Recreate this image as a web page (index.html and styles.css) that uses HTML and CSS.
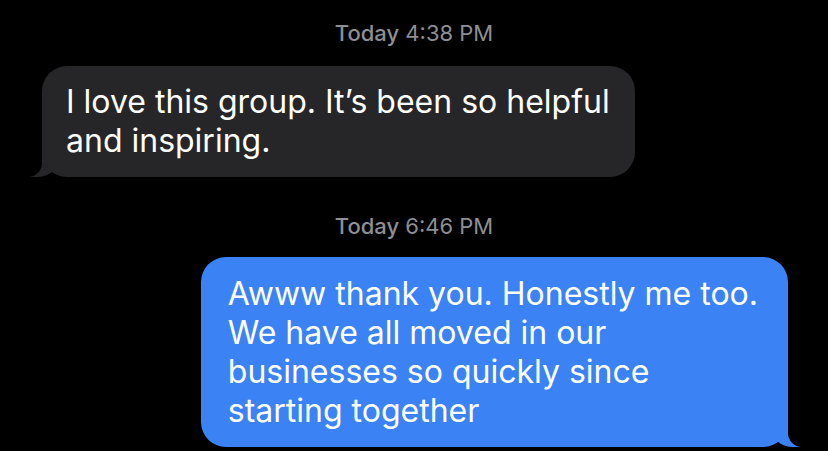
FILE: index.html
```html
<!DOCTYPE html>
<html lang="en">
<head>
    <meta charset="UTF-8">
    <meta name="viewport" content="width=device-width, initial-scale=1.0">
    <title>Messages</title>
    <link rel="stylesheet" href="styles.css">
</head>
<body>
    <div class="thread">
        <div class="timestamp"><b>Today</b> 4:38 PM</div>
        <div class="row">
            <div class="bubble received">I love this group. It’s been so helpful<br>and inspiring.</div>
        </div>
        <div class="timestamp second"><b>Today</b> 6:46 PM</div>
        <div class="row sent-row">
            <div class="bubble sent">Awww thank you. Honestly me too.<br>We have all moved in our<br>businesses so quickly since<br>starting together</div>
        </div>
    </div>
</body>
</html>
```

FILE: styles.css
```css
body {
    margin: 0;
    padding: 0;
    background-color: #000;
    font-family: Inter, 'Noto Sans', sans-serif;
    height: 451px;
    overflow: hidden;
}
.thread {
    display: flex;
    flex-direction: column;
    padding-top: 19px;
}
.timestamp {
    text-align: center;
    color: #8e8e93;
    font-size: 22px;
    line-height: 28px;
    margin-bottom: 19px;
}
.timestamp b {
    font-weight: 500;
}
.timestamp.second {
    margin-top: 35px;
    margin-bottom: 17px;
}
.row {
    display: flex;
    padding-left: 42px;
}
.sent-row {
    justify-content: flex-end;
    padding-left: 0;
    padding-right: 40px;
}
.bubble {
    position: relative;
    font-size: 32px;
    line-height: 39px;
    color: #fff;
    padding: 16px 25px 17px 24px;
    border-radius: 25px;
}
.received {
    background-color: #262628;
}
.sent {
    background-color: #3b83f5;
    padding: 17px 30px 17px 27px;
}
.bubble::before,
.bubble::after {
    content: "";
    position: absolute;
    bottom: 0;
    height: 28px;
}
.received::before {
    left: -12px;
    width: 30px;
    background-color: #262628;
    border-bottom-right-radius: 22px;
}
.received::after {
    left: -26px;
    width: 26px;
    background-color: #000;
    border-bottom-right-radius: 14px;
}
.sent::before {
    right: -12px;
    width: 30px;
    background-color: #3b83f5;
    border-bottom-left-radius: 22px;
}
.sent::after {
    right: -26px;
    width: 26px;
    background-color: #000;
    border-bottom-left-radius: 14px;
}
```
